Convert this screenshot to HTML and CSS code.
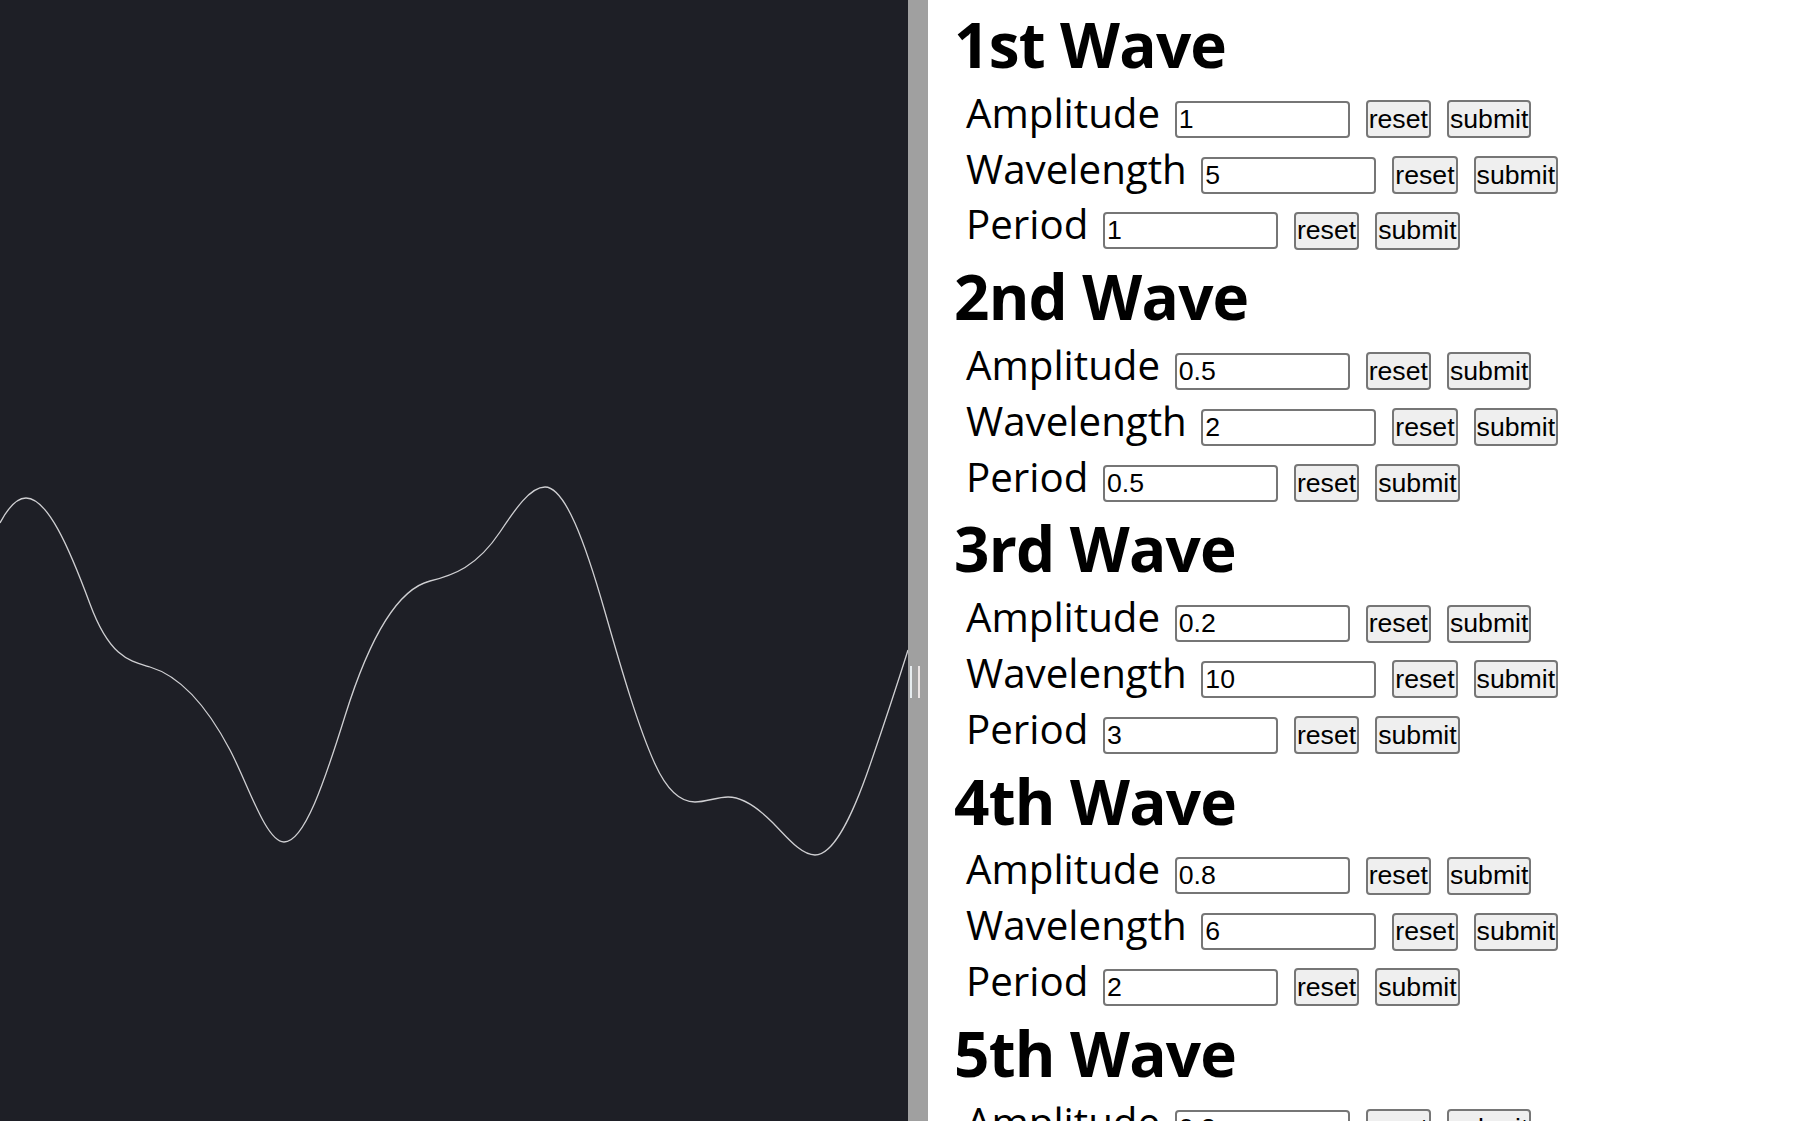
FILE: index.html
```html
<!DOCTYPE html>
<html lang="en">
<head>
<meta charset="utf-8">
<title>Wave Composer</title>
<link rel="stylesheet" href="styles.css">
</head>
<body>
<div class="split">
  <div class="pane-left">
    <svg class="wave-canvas" width="908" height="1364" viewBox="0 0 908 1364" aria-hidden="true">
      <path class="wave-line" d="M0,523 C8.67,506.5 17.33,498 26,498 C47.33,498 68.67,546.4 90,604 C110,658 130,661 150,667 C176.67,675 203.33,699.3 230,750 C248,784.2 266,842 284,842 C304.33,842 324.67,781.1 345,716 C373.33,625.3 401.67,588.1 430,581 C453.33,575.2 476.67,567 500,532 C515,509.5 530,487 545,487 C565,487 585,542 605,612 C621.67,670.3 638.33,727.3 655,764 C668.33,793.3 681.67,802 695,802 C706,802 717,797 728,797 C742.67,797 757.33,807.3 772,822 C786.33,836.3 800.67,855 815,855 C833.33,855 851.67,818.2 870,765 C882.67,728.3 895.33,690.5 908,650"/>
    </svg>
  </div>
  <div class="gutter"><span class="grip"></span></div>
  <div class="pane-right">
    <section class="wave">
      <h1 class="wave-title">1st Wave</h1>
      <div class="field"><label>Amplitude</label><input type="text" value="1"><button>reset</button><button>submit</button></div>
      <div class="field"><label>Wavelength</label><input type="text" value="5"><button>reset</button><button>submit</button></div>
      <div class="field"><label>Period</label><input type="text" value="1"><button>reset</button><button>submit</button></div>
    </section>
    <section class="wave">
      <h1 class="wave-title">2nd Wave</h1>
      <div class="field"><label>Amplitude</label><input type="text" value="0.5"><button>reset</button><button>submit</button></div>
      <div class="field"><label>Wavelength</label><input type="text" value="2"><button>reset</button><button>submit</button></div>
      <div class="field"><label>Period</label><input type="text" value="0.5"><button>reset</button><button>submit</button></div>
    </section>
    <section class="wave">
      <h1 class="wave-title">3rd Wave</h1>
      <div class="field"><label>Amplitude</label><input type="text" value="0.2"><button>reset</button><button>submit</button></div>
      <div class="field"><label>Wavelength</label><input type="text" value="10"><button>reset</button><button>submit</button></div>
      <div class="field"><label>Period</label><input type="text" value="3"><button>reset</button><button>submit</button></div>
    </section>
    <section class="wave">
      <h1 class="wave-title">4th Wave</h1>
      <div class="field"><label>Amplitude</label><input type="text" value="0.8"><button>reset</button><button>submit</button></div>
      <div class="field"><label>Wavelength</label><input type="text" value="6"><button>reset</button><button>submit</button></div>
      <div class="field"><label>Period</label><input type="text" value="2"><button>reset</button><button>submit</button></div>
    </section>
    <section class="wave">
      <h1 class="wave-title">5th Wave</h1>
      <div class="field"><label>Amplitude</label><input type="text" value="0.3"><button>reset</button><button>submit</button></div>
      <div class="field"><label>Wavelength</label><input type="text" value="3"><button>reset</button><button>submit</button></div>
      <div class="field"><label>Period</label><input type="text" value="1.5"><button>reset</button><button>submit</button></div>
    </section>
  </div>
</div>
</body>
</html>
```
FILE: styles.css
```css
html, body {
  margin: 0;
  height: 100%;
  overflow: hidden;
  background: #ffffff;
}

.split {
  display: flex;
  height: 1364px;
}

.pane-left {
  flex: none;
  width: 908px;
  background: #1e1f26;
  overflow: hidden;
}

.wave-canvas {
  display: block;
}

.wave-line {
  fill: none;
  stroke: #cfcfd2;
  stroke-width: 1.3;
}

.gutter {
  flex: none;
  width: 20px;
  background: #a0a0a0;
  display: flex;
  align-items: center;
}

.grip {
  display: block;
  width: 6px;
  height: 32px;
  margin-left: 2px;
  border-left: 2.5px solid #e6ecef;
  border-right: 2.5px solid #ece6e6;
}

.pane-right {
  flex: 1;
  padding-left: 26px;
  font-family: "Open Sans", "Noto Sans", sans-serif;
  color: #000;
}

.wave-title {
  margin: 0;
  font-size: 62px;
  font-weight: 700;
  letter-spacing: -0.8px;
  line-height: 80.8px;
  padding-top: 4px;
}

.field {
  display: flex;
  align-items: baseline;
  margin-left: 12px;
  font-size: 40.3px;
  line-height: 55.8px;
}

.field label {
  margin-right: 14.5px;
}

.field input {
  box-sizing: border-box;
  width: 175px;
  height: 37px;
  margin: 0;
  padding: 0 2px;
  border: 2px solid #767676;
  border-radius: 4px;
  font-family: "Liberation Sans", Arial, sans-serif;
  font-size: 26.67px;
  color: #000;
  background: #fff;
}

.field button {
  box-sizing: border-box;
  height: 38px;
  margin: 0 0 0 16px;
  padding: 0 1px;
  border: 2px solid #767676;
  border-radius: 4px;
  background: #efefef;
  font-family: "Liberation Sans", Arial, sans-serif;
  font-size: 26.67px;
  color: #000;
}
```
